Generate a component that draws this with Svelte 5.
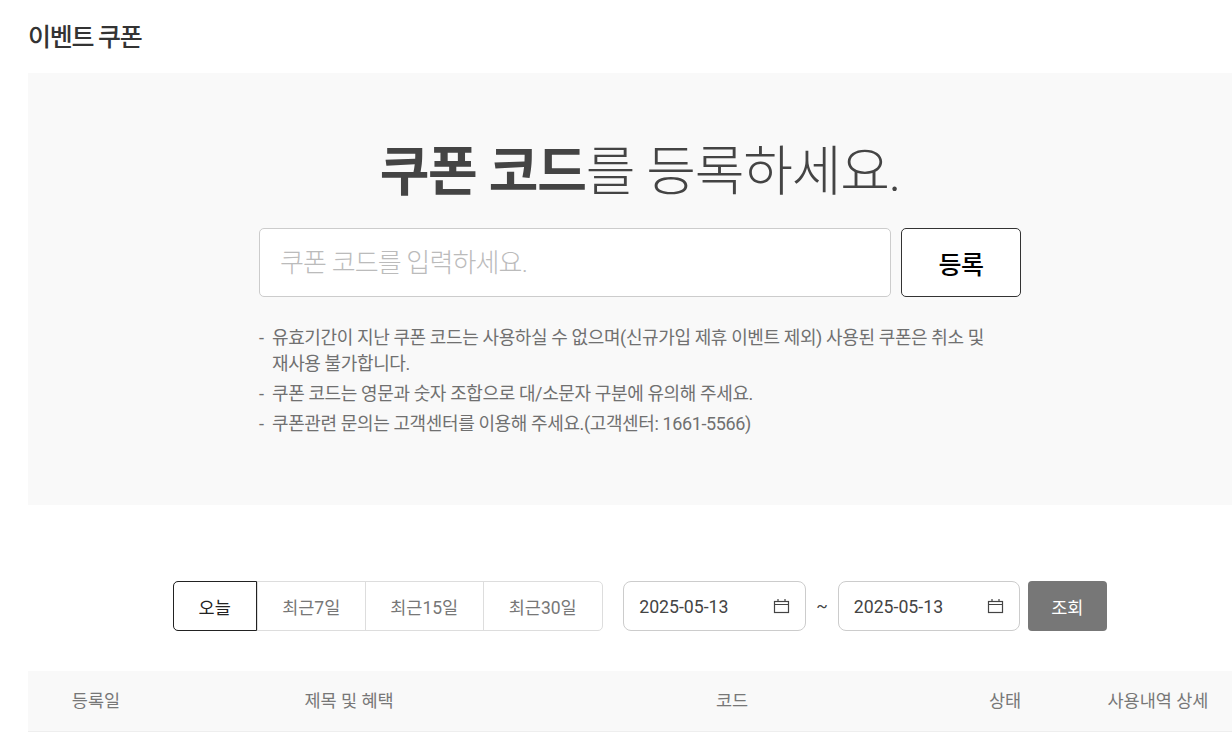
<script>
  const notes = [
    "유효기간이 지난 쿠폰 코드는 사용하실 수 없으며(신규가입 제휴 이벤트 제외) 사용된 쿠폰은 취소 및 재사용 불가합니다.",
    "쿠폰 코드는 영문과 숫자 조합으로 대/소문자 구분에 유의해 주세요.",
    "쿠폰관련 문의는 고객센터를 이용해 주세요.(고객센터: 1661-5566)"
  ];
  const ranges = ["오늘", "최근7일", "최근15일", "최근30일"];
  const dates = ["2025-05-13", "2025-05-13"];
  const columns = [
    { label: "등록일", cls: "c-date" },
    { label: "제목 및 혜택", cls: "c-title" },
    { label: "코드", cls: "c-code" },
    { label: "상태", cls: "c-status" },
    { label: "사용내역 상세", cls: "c-detail" }
  ];
</script>

<div class="page">
  <h1>이벤트 쿠폰</h1>

  <section class="register">
    <h2><strong>쿠폰 코드</strong>를 등록하세요.</h2>
    <div class="form">
      <input type="text" placeholder="쿠폰 코드를 입력하세요." />
      <button class="submit">등록</button>
    </div>
    <ul>
      {#each notes as note}
        <li>{note}</li>
      {/each}
    </ul>
  </section>

  <div class="filter">
    <div class="ranges">
      {#each ranges as range, i}
        <button class:active={i === 0}>{range}</button>
      {/each}
    </div>
    <div class="dates">
      {#each dates as date, i}
        {#if i > 0}<span class="tilde">~</span>{/if}
        <div class="date">
          <span>{date}</span>
          <svg width="17" height="17" viewBox="0 0 17 17" fill="none" stroke="#444" stroke-width="1.2">
            <rect x="1.5" y="3.5" width="14" height="11" />
            <path d="M1.5 6.5h14M5 1v2.5M12 1v2.5" />
          </svg>
        </div>
      {/each}
    </div>
    <button class="search">조회</button>
  </div>

  <div class="thead">
    {#each columns as col}
      <div class={col.cls}>{col.label}</div>
    {/each}
  </div>
</div>

<style>
  :global(body) {
    margin: 0;
    background: #fff;
    overflow: hidden;
  }

  .page {
    width: 1224px;
    height: 742px;
    padding-left: 28px;
    font-family: Roboto, "Noto Sans CJK KR", sans-serif;
    color: #333;
  }

  h1 {
    margin: 0;
    height: 73px;
    box-sizing: border-box;
    padding-top: 21px;
    font-size: 25px;
    line-height: 34px;
    font-weight: 500;
    letter-spacing: -1.3px;
  }

  .register {
    height: 432px;
    box-sizing: border-box;
    padding-top: 64px;
    background: #f9f9f9;
    display: flex;
    flex-direction: column;
    align-items: center;
  }

  h2 {
    margin: 0;
    height: 91px;
    font-size: 54px;
    line-height: 72px;
    font-weight: 300;
    letter-spacing: -1.2px;
    color: #444;
  }

  h2 strong {
    font-weight: 700;
  }

  .form {
    display: flex;
    gap: 10px;
    width: 762px;
  }

  input {
    width: 632px;
    height: 69px;
    box-sizing: border-box;
    padding: 0 20px;
    border: 1px solid #ccc;
    border-radius: 5px;
    background: #fff;
    font-family: inherit;
    font-size: 26px;
    font-weight: 300;
    letter-spacing: -0.85px;
    outline: none;
  }

  input::placeholder {
    color: #bbb;
  }

  .submit {
    width: 120px;
    height: 69px;
    border: 1px solid #333;
    border-radius: 5px;
    background: #fff;
    color: #000;
    font-family: inherit;
    font-size: 25px;
    font-weight: 500;
    letter-spacing: -0.5px;
  }

  ul {
    list-style: none;
    margin: 28px 0 0;
    padding: 0;
    width: 762px;
    font-size: 18px;
    line-height: 26px;
    color: #707070;
    letter-spacing: -0.38px;
    word-break: keep-all;
  }

  li {
    position: relative;
    padding: 0 30px 4px 13px;
  }

  li:first-child {
    padding-left: 13px;
  }

  li::before {
    content: "-";
    position: absolute;
    left: 0;
  }

  .filter {
    display: flex;
    justify-content: center;
    gap: 20px;
    margin-top: 76px;
    height: 50px;
  }

  .ranges {
    display: flex;
    width: 430px;
    border: 1px solid #ddd;
    border-radius: 5px;
    box-sizing: border-box;
    background: #fff;
  }

  .ranges button {
    flex: 0 0 auto;
    width: 108px;
    margin: 0;
    border: 0;
    border-left: 1px solid #ddd;
    background: none;
    color: #777;
    font-family: inherit;
    font-size: 17.5px;
    padding: 0 1px 0 0;
  }

  .ranges button:nth-child(3) {
    width: 118px;
  }

  .ranges button:nth-child(4) {
    width: 119px;
  }

  .ranges button.active {
    width: 84px;
    margin: -1px 0 -1px -1px;
    border: 1px solid #222;
    border-radius: 5px 0 0 5px;
    color: #222;
  }

  .dates {
    display: flex;
    align-items: center;
    gap: 10px;
  }

  .date {
    width: 183px;
    height: 50px;
    box-sizing: border-box;
    border: 1px solid #ccc;
    border-radius: 8px;
    display: flex;
    align-items: center;
    justify-content: space-between;
    padding: 0 15px 0 15px;
    font-size: 17.7px;
    color: #444;
  }

  .date span {
    padding-top: 2px;
  }

  .date:last-child {
    width: 182px;
  }

  .tilde {
    font-size: 17px;
    color: #444;
  }

  .search {
    width: 79px;
    height: 50px;
    margin-left: -12px;
    border: 0;
    border-radius: 4px;
    background: #777;
    color: #fff;
    font-family: inherit;
    font-size: 17.5px;
  }

  .thead {
    display: flex;
    align-items: center;
    height: 60px;
    margin-top: 40px;
    background: #f9f9f9;
    border-bottom: 1px solid #eee;
    font-size: 17.5px;
    color: #777;
  }

  .thead div {
    text-align: center;
    flex: 0 0 auto;
    margin-top: -3px;
  }

  .c-date { width: 136px; }
  .c-title { width: 370px; }
  .c-code { width: 396px; }
  .c-status { width: 150px; }
  .c-detail { width: 156px; }
</style>
